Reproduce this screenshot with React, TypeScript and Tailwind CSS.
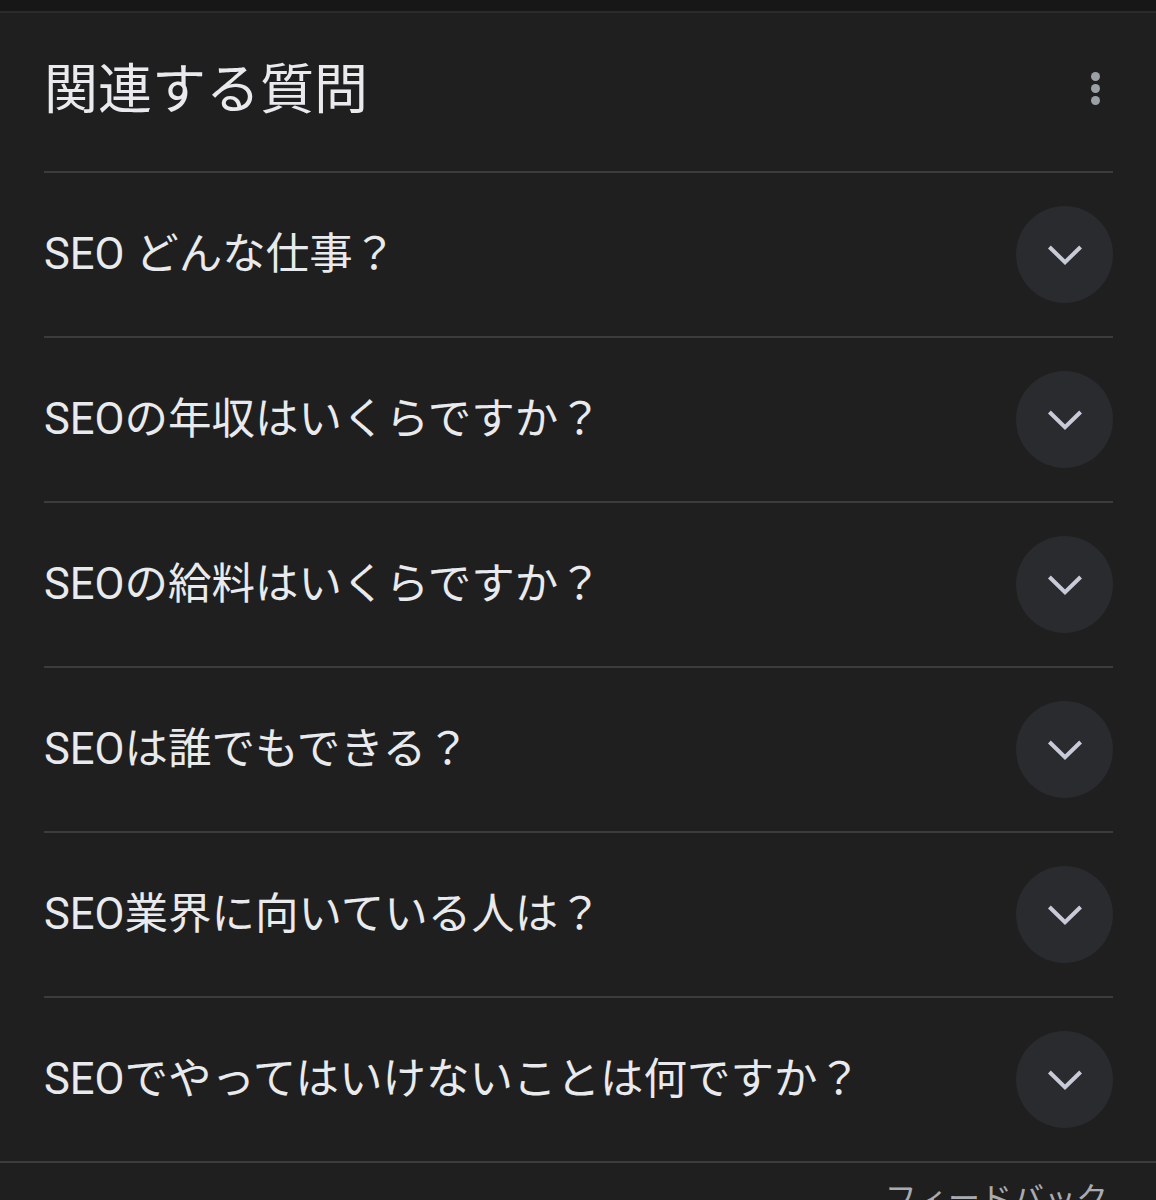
import React from 'react';

const questions = [
  'SEO どんな仕事？',
  'SEOの年収はいくらですか？',
  'SEOの給料はいくらですか？',
  'SEOは誰でもできる？',
  'SEO業界に向いている人は？',
  'SEOでやってはいけないことは何ですか？',
];

const font = { fontFamily: 'Roboto, "Noto Sans CJK JP", sans-serif' };

function Chevron() {
  return (
    <svg width="48" height="48" viewBox="0 0 24 24" fill="none">
      <path d="M4.2 8 12 15.6 19.8 8" stroke="#c8cad8" strokeWidth="2" strokeLinecap="butt" />
    </svg>
  );
}

export default function App() {
  return (
    <div className="w-[1156px] h-[1200px] overflow-hidden bg-[#1f1f1f] text-[#e8eaed]" style={font}>
      <div className="h-[13px] bg-[#171717] border-b-2 border-[#2b2b2b]" />
      <div className="px-[44px] pr-[43px]">
        <div className="h-[158px] flex items-center justify-between">
          <h2 className="text-[54px] leading-none font-normal -mt-[2px]">関連する質問</h2>
          <div className="flex flex-col gap-[3px] mr-[13px] -mt-[8px]">
            <span className="w-[9px] h-[9px] rounded-full bg-[#9aa0a6]" />
            <span className="w-[9px] h-[9px] rounded-full bg-[#9aa0a6]" />
            <span className="w-[9px] h-[9px] rounded-full bg-[#9aa0a6]" />
          </div>
        </div>
        {questions.map((q) => (
          <div key={q} className="h-[165px] flex items-center justify-between border-t-2 border-[#3c3c3c]">
            <span className="text-[43.5px] leading-none">{q}</span>
            <div className="w-[97px] h-[97px] rounded-full bg-[#2a2b2e] flex items-center justify-center">
              <Chevron />
            </div>
          </div>
        ))}
      </div>
      <div className="border-t-2 border-[#3c3c3c] flex justify-end pr-[48px] pt-[20px]">
        <span className="text-[32px] leading-none text-[#a8abb0]">フィードバック</span>
      </div>
    </div>
  );
}
